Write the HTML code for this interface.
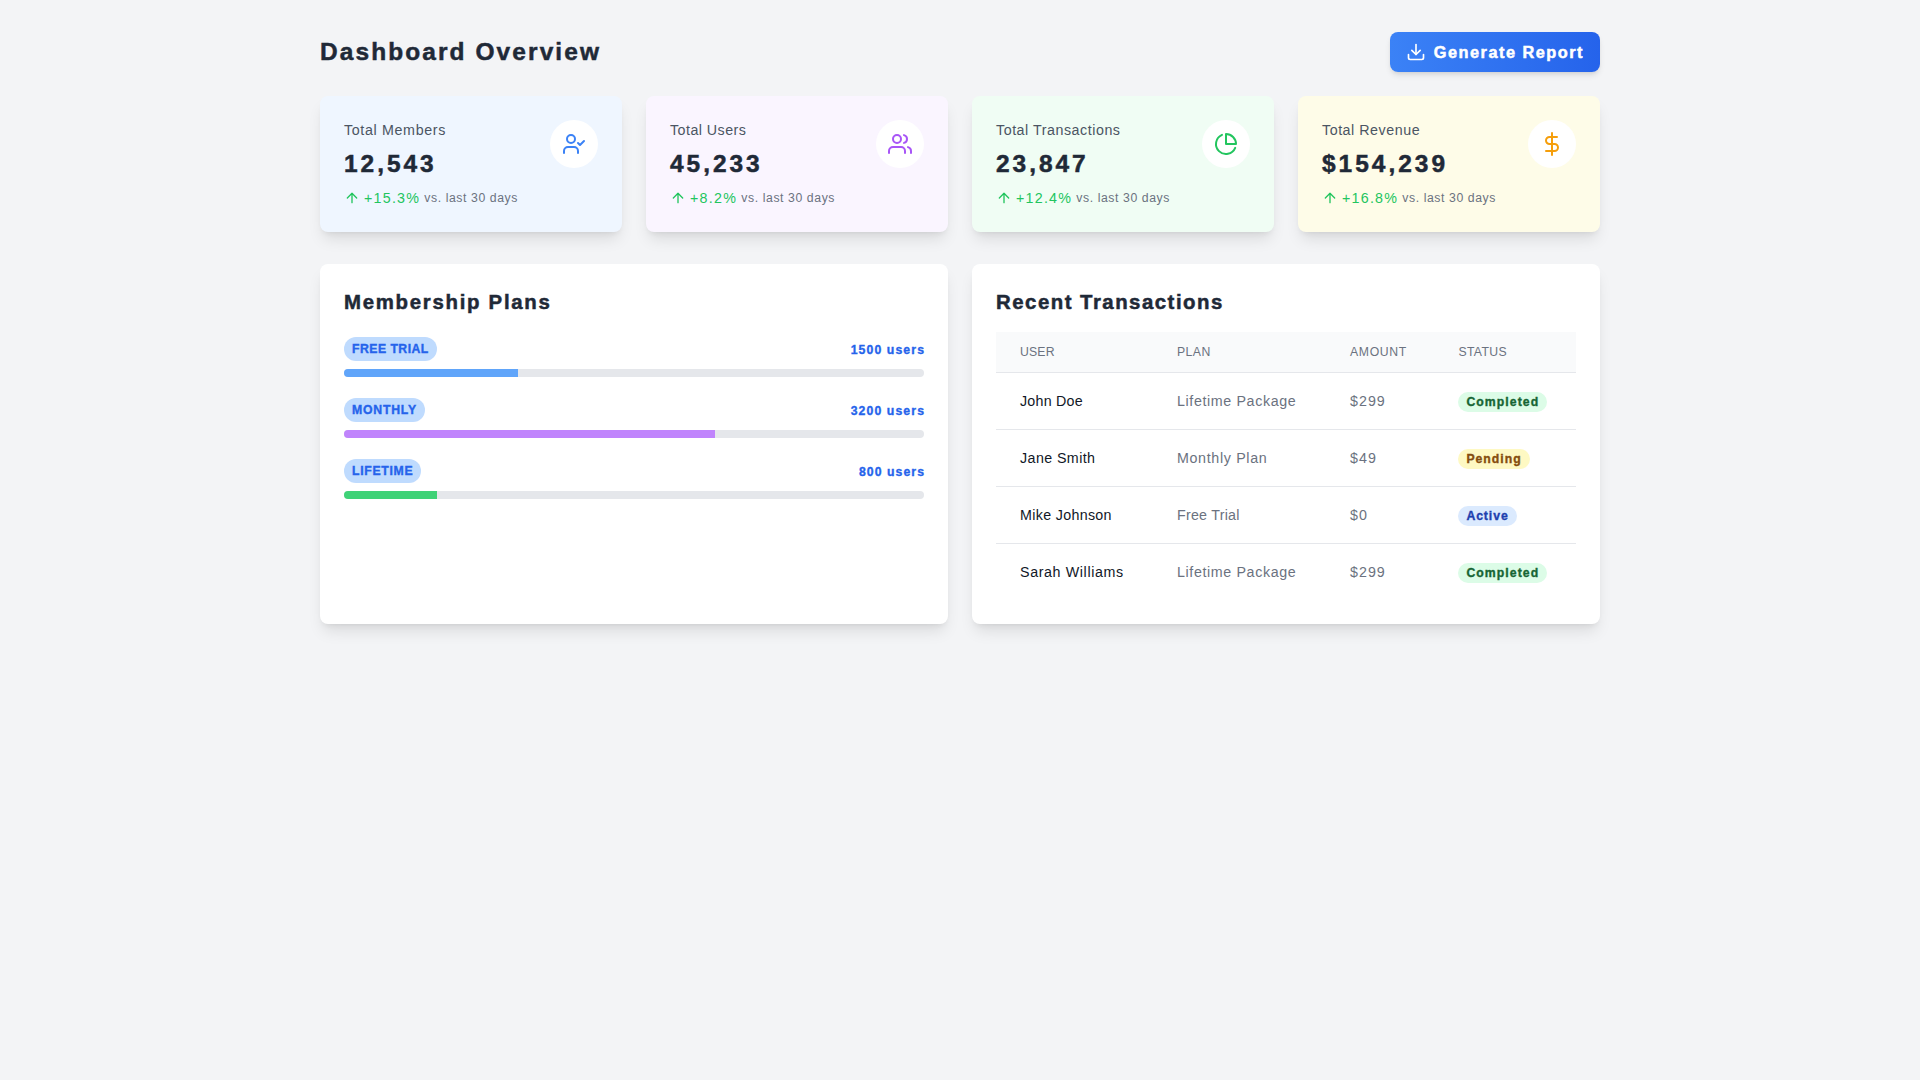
<!DOCTYPE html>
<html><head><meta charset="utf-8">
<style>
*,*::before,*::after{box-sizing:border-box;margin:0;padding:0;border:0 solid #e5e7eb}
html{line-height:1.5}
body{font-family:"Liberation Sans",sans-serif;background:#f3f4f6;color:#000;padding:32px;min-height:1080px}
.wrap{max-width:1280px;margin:0 auto}
.hdr{display:flex;justify-content:space-between;align-items:center;margin-bottom:24px}
h1{font-size:24.48px;line-height:32px;font-weight:700;color:#1f2937}
.btn{font-family:inherit;display:flex;align-items:center;padding:8px 16px;border-radius:8px;color:#fff;font-weight:600;font-size:16.32px;line-height:24px;background:linear-gradient(to right,#3b82f6,#2563eb);box-shadow:0 4px 6px -1px rgba(0,0,0,.1),0 2px 4px -2px rgba(0,0,0,.1)}
.btn svg{width:20px;height:20px;margin-right:8px}
.cards{display:grid;grid-template-columns:repeat(4,1fr);gap:24px;margin-bottom:32px}
.card{border-radius:8px;padding:24px;box-shadow:0 10px 15px -3px rgba(0,0,0,.1),0 4px 6px -4px rgba(0,0,0,.1)}
.card .row{display:flex;justify-content:space-between;align-items:flex-start}
.lbl{font-size:14.28px;line-height:20px;color:#4b5563}
.num{font-size:24.48px;line-height:32px;font-weight:700;color:#1f2937;margin-top:8px}
.chg{display:flex;align-items:center;margin-top:8px}
.chg svg{width:16px;height:16px;margin-right:4px}
.pct{font-size:14.28px;line-height:20px;color:#22c55e}
.vs{font-size:12.24px;line-height:16px;color:#6b7280;margin-left:4px}
.ic{padding:12px;border-radius:9999px;background:#fff}
.ic svg{width:24px;height:24px;display:block}
.panels{display:grid;grid-template-columns:repeat(2,1fr);gap:24px}
.panel{background:#fff;border-radius:8px;padding:24px;box-shadow:0 10px 15px -3px rgba(0,0,0,.1),0 4px 6px -4px rgba(0,0,0,.1)}
h2{font-size:20.4px;line-height:28px;font-weight:700;color:#1f2937;margin-bottom:16px}
.plan{position:relative;padding-top:4px}
.prow{display:flex;margin-bottom:8px;align-items:center;justify-content:space-between}
.badge{font-size:12.24px;line-height:16px;font-weight:600;display:inline-block;padding:4px 8px;text-transform:uppercase;border-radius:9999px;color:#2563eb;background:#bfdbfe}
.cnt{font-size:12.24px;line-height:16px;font-weight:600;display:inline-block;color:#2563eb}
.track{overflow:hidden;height:8px;margin-bottom:16px;display:flex;border-radius:9999px;background:#e5e7eb}
.fill{height:8px}
table{width:100%;border-collapse:collapse;text-indent:0}
thead{background:#f9fafb}
th{padding:12px 24px;text-align:left;font-size:12.24px;line-height:16px;font-weight:500;color:#6b7280;text-transform:uppercase;letter-spacing:.05em}
tbody tr{border-top:1px solid #e5e7eb}
td{padding:16px 24px;white-space:nowrap}
.tn{font-size:14.28px;line-height:20px;color:#111827}
.tg{font-size:14.28px;line-height:20px;color:#6b7280}
.st{padding:0 8px;display:inline-flex;font-size:12.24px;line-height:20px;font-weight:600;border-radius:9999px}
.s-c{background:#dcfce7;color:#166534}
.s-p{background:#fef9c3;color:#854d0e}
.s-a{background:#dbeafe;color:#1e40af}
h1,h2,.num,.btn span{-webkit-text-stroke:0.5px currentColor}
.badge,.cnt,.st{-webkit-text-stroke:0.35px currentColor}
</style></head>
<body>
<div class="wrap">
  <div class="hdr">
    <h1 style="letter-spacing: 2.09px;">Dashboard Overview</h1>
    <button class="btn"><svg viewBox="0 0 24 24" fill="none" stroke="currentColor" stroke-width="2" stroke-linecap="round" stroke-linejoin="round"><path d="M21 15v4a2 2 0 0 1-2 2H5a2 2 0 0 1-2-2v-4"></path><polyline points="7 10 12 15 17 10"></polyline><line x1="12" y1="15" x2="12" y2="3"></line></svg><span style="letter-spacing: 1.49px;">Generate Report</span></button>
  </div>
  <div class="cards">
    <div class="card" style="background:#eff6ff">
      <div class="row">
        <div>
          <p class="lbl" style="letter-spacing: 0.65px;">Total Members</p>
          <p class="num" style="letter-spacing: 2.96px;">12,543</p>
          <div class="chg"><svg viewBox="0 0 24 24" fill="none" stroke="#22c55e" stroke-width="2" stroke-linecap="round" stroke-linejoin="round"><line x1="12" y1="19" x2="12" y2="5"></line><polyline points="5 12 12 5 19 12"></polyline></svg><span class="pct" style="letter-spacing: 1.24px;">+15.3%</span><span class="vs" style="letter-spacing: 0.59px;">vs. last 30 days</span></div>
        </div>
        <div class="ic"><svg viewBox="0 0 24 24" fill="none" stroke="#3b82f6" stroke-width="2" stroke-linecap="round" stroke-linejoin="round"><path d="M16 21v-2a4 4 0 0 0-4-4H6a4 4 0 0 0-4 4v2"></path><circle cx="9" cy="7" r="4"></circle><polyline points="16 11 18 13 22 9"></polyline></svg></div>
      </div>
    </div>
    <div class="card" style="background:#faf5ff">
      <div class="row">
        <div>
          <p class="lbl" style="letter-spacing: 0.46px;">Total Users</p>
          <p class="num" style="letter-spacing: 2.96px;">45,233</p>
          <div class="chg"><svg viewBox="0 0 24 24" fill="none" stroke="#22c55e" stroke-width="2" stroke-linecap="round" stroke-linejoin="round"><line x1="12" y1="19" x2="12" y2="5"></line><polyline points="5 12 12 5 19 12"></polyline></svg><span class="pct" style="letter-spacing: 1.29px;">+8.2%</span><span class="vs" style="letter-spacing: 0.59px;">vs. last 30 days</span></div>
        </div>
        <div class="ic"><svg viewBox="0 0 24 24" fill="none" stroke="#a855f7" stroke-width="2" stroke-linecap="round" stroke-linejoin="round"><path d="M17 21v-2a4 4 0 0 0-4-4H5a4 4 0 0 0-4 4v2"></path><circle cx="9" cy="7" r="4"></circle><path d="M23 21v-2a4 4 0 0 0-3-3.87"></path><path d="M16 3.13a4 4 0 0 1 0 7.75"></path></svg></div>
      </div>
    </div>
    <div class="card" style="background:#f0fdf4">
      <div class="row">
        <div>
          <p class="lbl" style="letter-spacing: 0.53px;">Total Transactions</p>
          <p class="num" style="letter-spacing: 2.96px;">23,847</p>
          <div class="chg"><svg viewBox="0 0 24 24" fill="none" stroke="#22c55e" stroke-width="2" stroke-linecap="round" stroke-linejoin="round"><line x1="12" y1="19" x2="12" y2="5"></line><polyline points="5 12 12 5 19 12"></polyline></svg><span class="pct" style="letter-spacing: 1.24px;">+12.4%</span><span class="vs" style="letter-spacing: 0.59px;">vs. last 30 days</span></div>
        </div>
        <div class="ic"><svg viewBox="0 0 24 24" fill="none" stroke="#22c55e" stroke-width="2" stroke-linecap="round" stroke-linejoin="round"><path d="M21.21 15.89A10 10 0 1 1 8 2.83"></path><path d="M22 12A10 10 0 0 0 12 2v10z"></path></svg></div>
      </div>
    </div>
    <div class="card" style="background:#fefce8">
      <div class="row">
        <div>
          <p class="lbl" style="letter-spacing: 0.53px;">Total Revenue</p>
          <p class="num" style="letter-spacing: 3px;">$154,239</p>
          <div class="chg"><svg viewBox="0 0 24 24" fill="none" stroke="#22c55e" stroke-width="2" stroke-linecap="round" stroke-linejoin="round"><line x1="12" y1="19" x2="12" y2="5"></line><polyline points="5 12 12 5 19 12"></polyline></svg><span class="pct" style="letter-spacing: 1.24px;">+16.8%</span><span class="vs" style="letter-spacing: 0.59px;">vs. last 30 days</span></div>
        </div>
        <div class="ic"><svg viewBox="0 0 24 24" fill="none" stroke="#f59e0b" stroke-width="2" stroke-linecap="round" stroke-linejoin="round"><line x1="12" y1="1" x2="12" y2="23"></line><path d="M17 5H9.5a3.5 3.5 0 0 0 0 7h5a3.5 3.5 0 0 1 0 7H6"></path></svg></div>
      </div>
    </div>
  </div>
  <div class="panels">
    <div class="panel">
      <h2 style="letter-spacing: 1.71px;">Membership Plans</h2>
      <div class="plan">
        <div class="prow"><div><span class="badge" style="letter-spacing: 0.47px;">Free Trial</span></div><div style="text-align:right"><span class="cnt" style="letter-spacing: 1.12px; margin-right: -1.12px;">1500 users</span></div></div>
        <div class="track"><div class="fill" style="width:30%;background:#60a5fa"></div></div>
      </div>
      <div class="plan">
        <div class="prow"><div><span class="badge" style="letter-spacing: 0.79px;">Monthly</span></div><div style="text-align:right"><span class="cnt" style="letter-spacing: 1.12px; margin-right: -1.12px;">3200 users</span></div></div>
        <div class="track"><div class="fill" style="width:64%;background:#c084fc"></div></div>
      </div>
      <div class="plan">
        <div class="prow"><div><span class="badge" style="letter-spacing: 0.69px;">Lifetime</span></div><div style="text-align:right"><span class="cnt" style="letter-spacing: 1.07px; margin-right: -1.07px;">800 users</span></div></div>
        <div class="track"><div class="fill" style="width:16%;background:#3fd277"></div></div>
      </div>
    </div>
    <div class="panel">
      <h2 style="letter-spacing: 1.49px;">Recent Transactions</h2>
      <table style="table-layout:fixed"><colgroup><col style="width:156.97px"><col style="width:173.11px"><col style="width:108.31px"><col style="width:141.61px"></colgroup>
        <thead><tr><th style="letter-spacing: 0.18px;">User</th><th style="letter-spacing: 0.46px;">Plan</th><th style="letter-spacing: 0.62px;">Amount</th><th style="letter-spacing: 0.36px;">Status</th></tr></thead>
        <tbody>
          <tr><td><span class="tn" style="letter-spacing: 0.22px;">John Doe</span></td><td><span class="tg" style="letter-spacing: 0.62px;">Lifetime Package</span></td><td><span class="tg" style="letter-spacing: 0.98px;">$299</span></td><td><span class="st s-c" style="letter-spacing: 1.07px;">Completed</span></td></tr>
          <tr><td><span class="tn" style="letter-spacing: 0.41px;">Jane Smith</span></td><td><span class="tg" style="letter-spacing: 0.66px;">Monthly Plan</span></td><td><span class="tg" style="letter-spacing: 0.98px;">$49</span></td><td><span class="st s-p" style="letter-spacing: 1.01px;">Pending</span></td></tr>
          <tr><td><span class="tn" style="letter-spacing: 0.32px;">Mike Johnson</span></td><td><span class="tg" style="letter-spacing: 0.25px;">Free Trial</span></td><td><span class="tg" style="letter-spacing: 0.98px;">$0</span></td><td><span class="st s-a" style="letter-spacing: 0.92px;">Active</span></td></tr>
          <tr><td><span class="tn" style="letter-spacing: 0.62px;">Sarah Williams</span></td><td><span class="tg" style="letter-spacing: 0.62px;">Lifetime Package</span></td><td><span class="tg" style="letter-spacing: 0.98px;">$299</span></td><td><span class="st s-c" style="letter-spacing: 1.07px;">Completed</span></td></tr>
        </tbody>
      </table>
    </div>
  </div>
</div>

</body></html>
